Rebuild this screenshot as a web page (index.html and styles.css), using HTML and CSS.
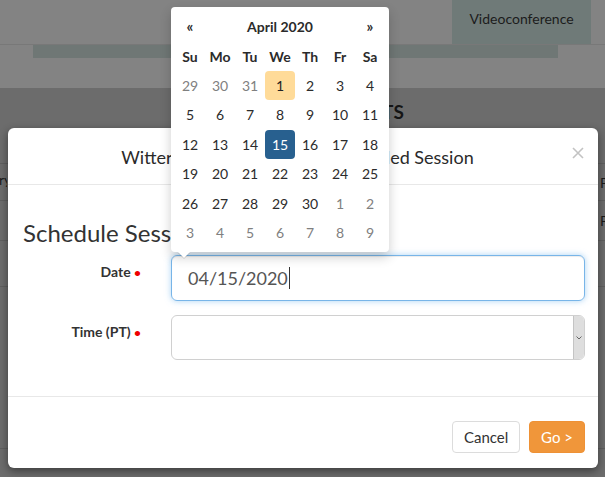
FILE: index.html
```html
<!DOCTYPE html>
<html>
<head>
<meta charset="utf-8">
<link rel="stylesheet" href="styles.css">
</head>
<body>
<div class="page">
  <div class="topbar">
    <div class="tab">Videoconference</div>
  </div>
  <div class="strip"></div>
  <div class="gap"></div>
  <div class="section">
    <div class="section-head"><h2 class="section-title">SESSION REQUESTS</h2></div>
    <div class="trow r1"><span class="cl">ry</span><span class="cr">Pending</span></div>
    <div class="trow r2"><span class="cl"></span><span class="cr">Pending</span></div>
    <div class="trow r3"></div>
    <div class="trow r4"></div>
    <div class="trow r5"></div>
  </div>
</div>

<div class="modal">
  <div class="modal-header">
    <div class="modal-title">Witter v. Smith – Schedule Recorded Session</div>
    <div class="close">
      <svg width="12" height="12" viewBox="0 0 12 12"><path d="M1 1 L11 11 M11 1 L1 11" stroke="#c3c3c3" stroke-width="1.6" fill="none"/></svg>
    </div>
  </div>
  <div class="modal-body">
    <h3 class="heading">Schedule Session</h3>
    <div class="form-row">
      <label class="label">Date <span class="req">•</span></label>
      <div class="input focus"><span class="val">04/15/2020</span><span class="caret"></span></div>
    </div>
    <div class="form-row second">
      <label class="label">Time (PT) <span class="req">•</span></label>
      <div class="select">
        <div class="sel-body"></div>
        <div class="sel-bar">
          <svg width="6" height="4" viewBox="0 0 6 4"><path d="M0.5 0.5 L3 3 L5.5 0.5" stroke="#666" stroke-width="1" fill="none"/></svg>
        </div>
      </div>
    </div>
  </div>
  <div class="modal-footer">
    <button class="btn btn-default">Cancel</button>
    <button class="btn btn-go">Go &gt;</button>
  </div>
</div>

<div class="dp">
  <div class="dp-head">
    <span class="dp-nav">«</span>
    <span class="dp-month">April 2020</span>
    <span class="dp-nav">»</span>
  </div>
  <div class="dp-dow">
    <span>Su</span><span>Mo</span><span>Tu</span><span>We</span><span>Th</span><span>Fr</span><span>Sa</span>
  </div>
  <div class="dp-days">
    <span class="old">29</span><span class="old">30</span><span class="old">31</span><span class="today">1</span><span>2</span><span>3</span><span>4</span>
    <span>5</span><span>6</span><span>7</span><span>8</span><span>9</span><span>10</span><span>11</span>
    <span>12</span><span>13</span><span>14</span><span class="active">15</span><span>16</span><span>17</span><span>18</span>
    <span>19</span><span>20</span><span>21</span><span>22</span><span>23</span><span>24</span><span>25</span>
    <span>26</span><span>27</span><span>28</span><span>29</span><span>30</span><span class="old">1</span><span class="old">2</span>
    <span class="old">3</span><span class="old">4</span><span class="old">5</span><span class="old">6</span><span class="old">7</span><span class="old">8</span><span class="old">9</span>
  </div>
  <div class="dp-arrow"></div>
</div>
</body>
</html>
```

FILE: styles.css
```css
* { box-sizing: border-box; }
html, body {
  margin: 0;
  padding: 0;
  width: 605px;
  height: 477px;
  overflow: hidden;
}
body {
  position: relative;
  background: #838383;
  font-family: Lato, "Liberation Sans", sans-serif;
  color: #333;
}

/* background page (dimmed) */
.page { width: 605px; height: 477px; }
.topbar {
  height: 45px;
  display: flex;
  justify-content: flex-end;
  border-bottom: 1px solid #787878;
}
.tab {
  width: 139px;
  margin-right: 14px;
  height: 44px;
  background: #6f7a78;
  color: #1c1c1c;
  font-size: 14px;
  text-align: center;
  padding-top: 10px;
}
.strip {
  height: 13px;
  margin: 0 47px 0 33px;
  background: #6f7775;
}
.gap { height: 30px; }
.section {
  background: #6c6c6c;
  height: 389px;
}
.section-head {
  height: 75px;
  padding-left: 226px;
  padding-top: 12px;
}
.section-title {
  margin: 0;
  font-size: 19px;
  font-weight: 700;
  color: #151515;
}
.trow {
  display: flex;
  justify-content: space-between;
  align-items: center;
  border-top: 1px solid #5f5f5f;
  font-size: 14px;
  color: #1a1a1a;
  white-space: nowrap;
}
.r1 { height: 37px; }
.r2 { height: 40px; }
.r3 { height: 46px; }
.r4 { height: 162px; }
.r5 { height: 29px; }
.cl { width: 8px; overflow: hidden; margin-left: -1px; padding-bottom: 6px; }
.cr { width: 5px; overflow: visible; }

/* modal */
.modal {
  position: absolute;
  left: 8px;
  top: 128px;
  width: 590px;
  height: 340px;
  background: #fff;
  border-radius: 6px;
  box-shadow: 0 3px 9px rgba(0,0,0,.45);
  display: flex;
  flex-direction: column;
}
.modal-header {
  height: 57px;
  border-bottom: 1px solid #e8e8e8;
  display: flex;
  align-items: center;
  padding: 0 14px 0 15px;
}
.modal-title {
  flex: 1;
  text-align: center;
  font-size: 18px;
  color: #2a2a2a;
  padding-top: 1px;
  white-space: nowrap;
}
.close {
  width: 12px;
  height: 12px;
  margin-bottom: 6px;
  display: flex;
}
.modal-body {
  padding: 15px 13px 0 15px;
  height: 211px;
}
.heading {
  margin: 20px 0 9px;
  font-size: 24px;
  font-weight: 400;
  line-height: 26px;
  color: #333;
}
.form-row {
  display: grid;
  grid-template-columns: 148px 1fr;
  align-items: start;
}
.form-row.second { margin-top: 14px; }
.label {
  text-align: right;
  padding-right: 30px;
  padding-top: 7px;
  font-size: 14px;
  font-weight: 700;
  line-height: 20px;
  color: #333;
}
.req { color: #e00; font-size: 12px; }
.input {
  height: 46px;
  border: 1px solid #78b5e8;
  border-radius: 6px;
  box-shadow: inset 0 1px 1px rgba(0,0,0,.075), 0 0 6px rgba(102,175,233,.55);
  display: flex;
  align-items: center;
  padding-left: 16px;
  font-size: 18px;
  color: #555;
}
.caret {
  width: 1px;
  height: 22px;
  background: #333;
  margin-left: 1px;
}
.select {
  height: 45px;
  border: 1px solid #d0d0d0;
  border-radius: 6px;
  display: flex;
  overflow: hidden;
}
.sel-body { flex: 1; }
.sel-bar {
  width: 11px;
  background: #dedede;
  border-left: 1px solid #c4c4c4;
  display: flex;
  align-items: center;
  justify-content: center;
  padding-top: 1px;
}
.modal-footer {
  border-top: 1px solid #e8e8e8;
  padding: 24px 13px 0 0;
  display: flex;
  justify-content: flex-end;
  gap: 9px;
}
.btn {
  height: 32px;
  border-radius: 4px;
  font-family: Lato, "Liberation Sans", sans-serif;
  font-size: 15px;
  padding: 0 11px;
  cursor: pointer;
}
.btn-default {
  width: 68px;
  background: #fff;
  border: 1px solid #dcdcdc;
  color: #333;
}
.btn-go {
  width: 56px;
  background: #f0963a;
  border: 1px solid #ee9135;
  color: #fff;
}

/* datepicker */
.dp {
  position: absolute;
  left: 171px;
  top: 7px;
  width: 218px;
  height: 245px;
  background: #fff;
  border-radius: 4px;
  box-shadow: 0 5px 12px rgba(0,0,0,.2);
  padding: 4px;
  font-size: 14px;
  color: #2b2b2b;
}
.dp-head {
  display: grid;
  grid-template-columns: 30px 150px 30px;
  height: 30px;
  align-items: center;
  text-align: center;
  font-weight: 700;
}
.dp-nav { font-size: 15px; }
.dp-dow {
  display: grid;
  grid-template-columns: repeat(7, 30px);
  height: 30px;
  align-items: center;
  text-align: center;
  font-weight: 700;
  font-size: 14px;
}
.dp-days {
  display: grid;
  grid-template-columns: repeat(7, 30px);
  grid-auto-rows: 29.5px;
  text-align: center;
}
.dp-days span {
  display: flex;
  align-items: center;
  justify-content: center;
  border-radius: 4px;
  margin-bottom: 1px;
}
.dp-days .old { color: #808080; }
.dp-days .today { background: #ffdb99; color: #222; }
.dp-days .active { background: #28608f; color: #fff; }
.dp-arrow {
  position: absolute;
  left: 7px;
  bottom: -6px;
  width: 0;
  height: 0;
  border-left: 6px solid transparent;
  border-right: 6px solid transparent;
  border-top: 6px solid #fff;
  filter: drop-shadow(0 1px 0 rgba(0,0,0,.12));
}
```
